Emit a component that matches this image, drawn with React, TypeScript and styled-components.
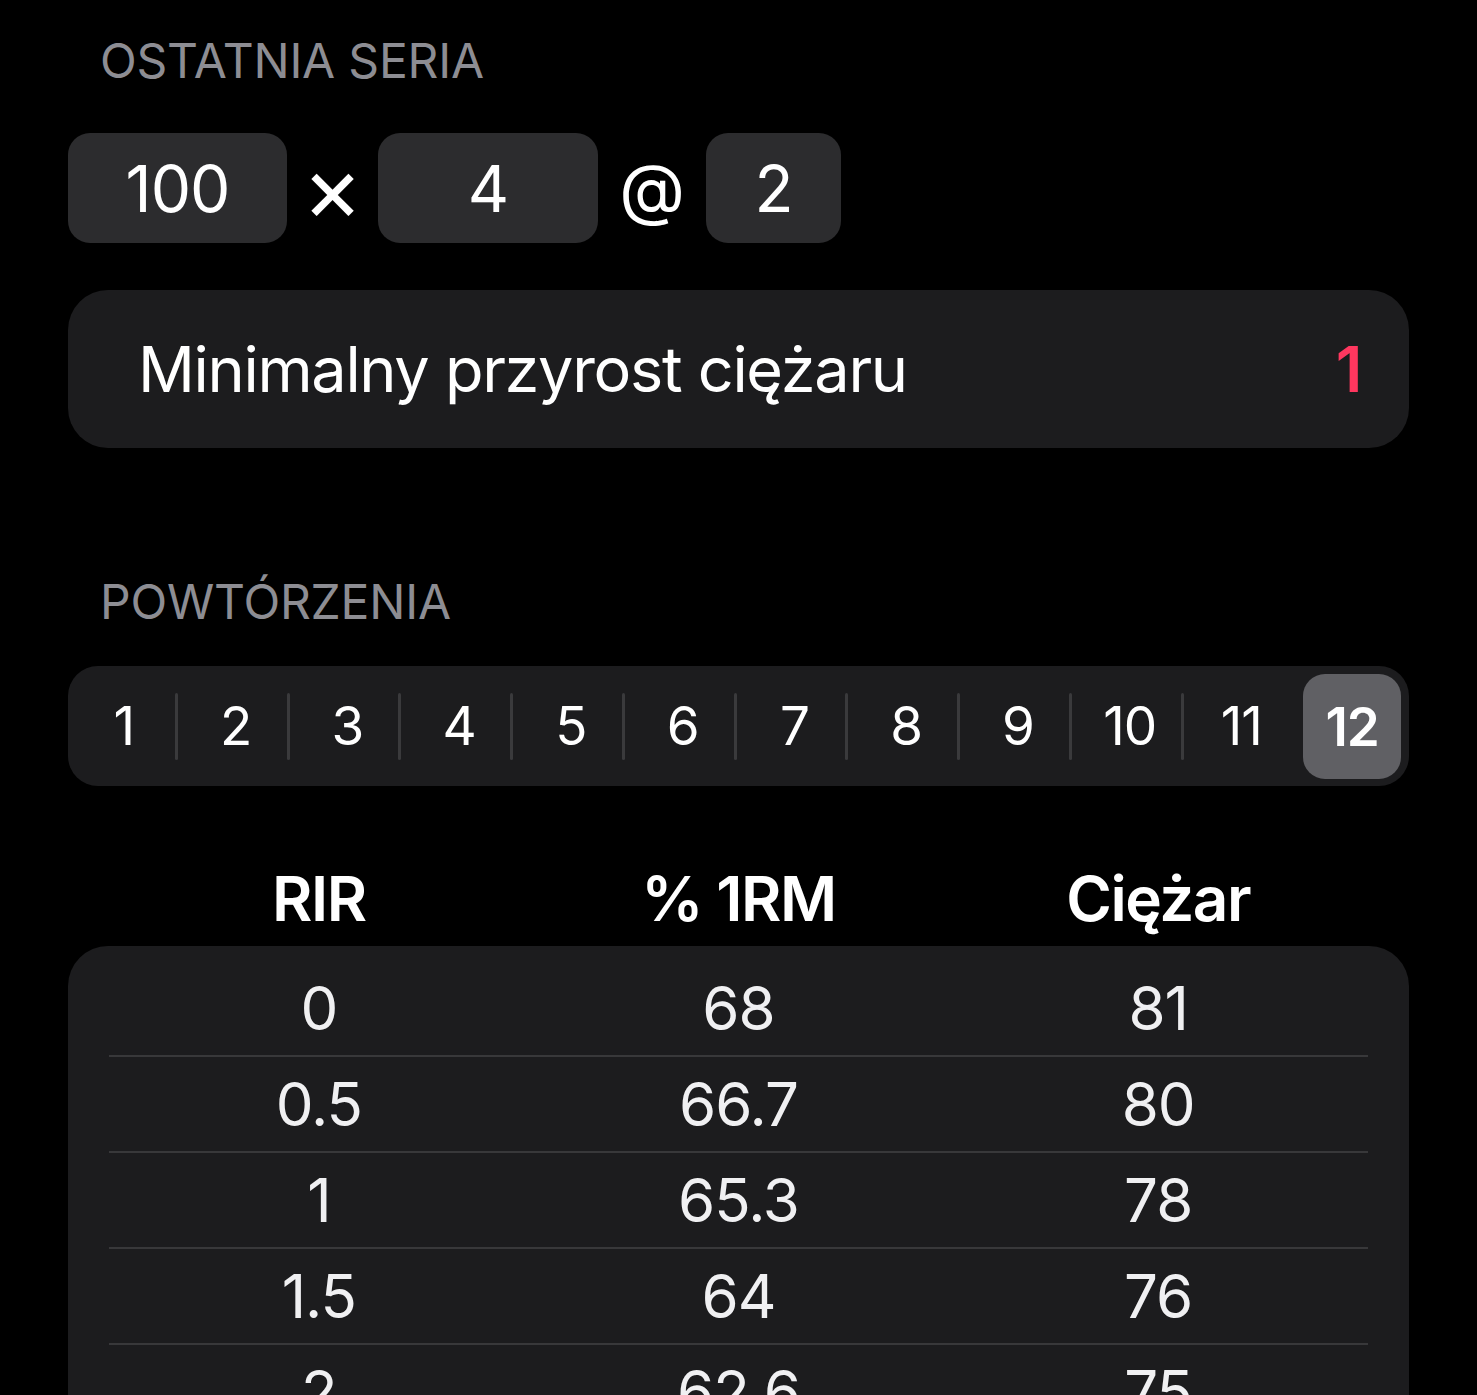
import React from 'react'
import styled, { createGlobalStyle } from 'styled-components'

const GlobalStyle = createGlobalStyle`
  html, body {
    margin: 0;
    padding: 0;
    background: #000;
    height: 1395px;
    overflow: hidden;
  }
  body {
    font-family: Inter, "Noto Sans", "Liberation Sans", sans-serif;
    color: #fff;
    -webkit-font-smoothing: antialiased;
  }
`

const Page = styled.div`
  display: flex;
  flex-direction: column;
  padding: 0 68px;

  & > * {
    flex-shrink: 0;
  }
`

const SectionLabel = styled.div<{ $top: number }>`
  margin: ${(p) => p.$top}px 0 0 32px;
  font-size: 48px;
  line-height: 56px;
  color: #8d8d93;
  letter-spacing: -0.2px;
`

const SetRow = styled.div`
  display: flex;
  align-items: center;
  margin-top: 44px;
`

const ValueBox = styled.div<{ $width: number }>`
  width: ${(p) => p.$width}px;
  height: 110px;
  border-radius: 22px;
  background: #2c2c2e;
  display: flex;
  align-items: center;
  justify-content: center;
  font-size: 64px;
  letter-spacing: -1px;
`

const Operator = styled.div<{ $width: number; $size: number }>`
  width: ${(p) => p.$width}px;
  text-align: center;
  font-size: ${(p) => p.$size}px;
  line-height: 1;
`

const IncrementCard = styled.div`
  margin-top: 47px;
  height: 158px;
  border-radius: 40px;
  background: #1c1c1e;
  display: flex;
  align-items: center;
  justify-content: space-between;
  padding: 0 48px 0 70px;
  font-size: 63px;
  letter-spacing: -1.3px;
`

const AccentValue = styled.span`
  color: #ff375f;
  font-weight: 600;
`

const Segmented = styled.div`
  margin-top: 36px;
  height: 120px;
  border-radius: 30px;
  background: #1c1c1e;
  display: grid;
  grid-template-columns: repeat(12, 1fr);
`

const Segment = styled.div<{ $active: boolean; $divider: boolean }>`
  position: relative;
  display: flex;
  align-items: center;
  justify-content: center;
  font-size: 53px;
  font-weight: ${(p) => (p.$active ? 600 : 400)};
  letter-spacing: -1px;
  margin: ${(p) => (p.$active ? '8px 8px 7px 6px' : '0')};
  border-radius: 22px;
  background: ${(p) => (p.$active ? '#606064' : 'transparent')};

  &::before {
    content: '';
    display: ${(p) => (p.$divider ? 'block' : 'none')};
    position: absolute;
    left: -5px;
    top: 27px;
    bottom: 26px;
    width: 3px;
    border-radius: 2px;
    background: #3a3a3c;
  }
`

const TableHead = styled.div`
  margin-top: 72px;
  padding: 0 41px;
  display: grid;
  grid-template-columns: repeat(3, 1fr);
  height: 80px;
  align-items: center;
  text-align: center;
  font-size: 62px;
  font-weight: 600;
  letter-spacing: -1.5px;
`

const TableCard = styled.div`
  margin-top: 8px;
  border-radius: 40px;
  background: #1c1c1e;
  padding: 15px 41px 0;
`

const TableRow = styled.div`
  display: grid;
  grid-template-columns: repeat(3, 1fr);
  height: 94px;
  align-items: center;
  text-align: center;
  font-size: 60px;
  letter-spacing: -1px;
  color: #f0f0f2;
  border-bottom: 2px solid #38383a;
`

const reps = Array.from({ length: 12 }, (_, i) => i + 1)
const selected = 12

const rows = [
  ['0', '68', '81'],
  ['0.5', '66.7', '80'],
  ['1', '65.3', '78'],
  ['1.5', '64', '76'],
  ['2', '62.6', '75'],
]

export default function App() {
  return (
    <>
      <GlobalStyle />
      <Page>
        <SectionLabel $top={33}>OSTATNIA SERIA</SectionLabel>
        <SetRow>
          <ValueBox $width={219}>100</ValueBox>
          <Operator $width={91} $size={92}>×</Operator>
          <ValueBox $width={220}>4</ValueBox>
          <Operator $width={108} $size={68}>@</Operator>
          <ValueBox $width={135}>2</ValueBox>
        </SetRow>
        <IncrementCard>
          <span>Minimalny przyrost ciężaru</span>
          <AccentValue>1</AccentValue>
        </IncrementCard>
        <SectionLabel $top={126}>POWTÓRZENIA</SectionLabel>
        <Segmented>
          {reps.map((n) => (
            <Segment
              key={n}
              $active={n === selected}
              $divider={n !== 1 && n !== selected && n !== selected + 1}
            >
              {n}
            </Segment>
          ))}
        </Segmented>
        <TableHead>
          <span>RIR</span>
          <span>% 1RM</span>
          <span>Ciężar</span>
        </TableHead>
        <TableCard>
          {rows.map((r) => (
            <TableRow key={r[0]}>
              <span>{r[0]}</span>
              <span>{r[1]}</span>
              <span>{r[2]}</span>
            </TableRow>
          ))}
        </TableCard>
      </Page>
    </>
  )
}
